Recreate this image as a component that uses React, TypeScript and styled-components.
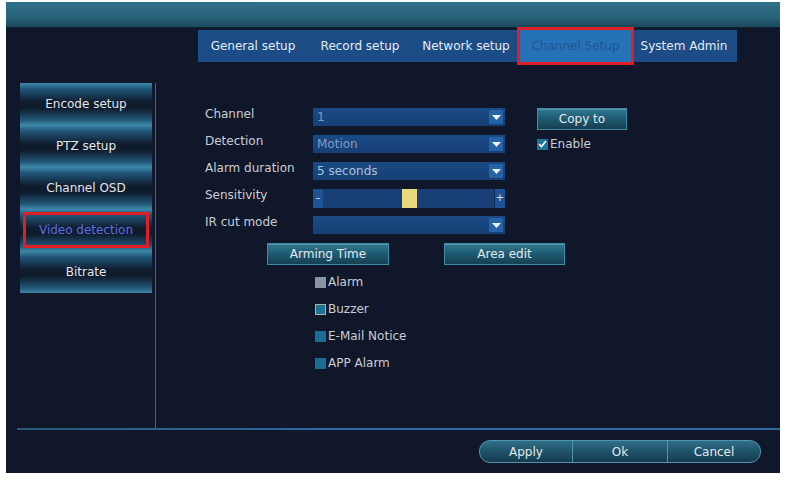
import React from 'react';
import styled, { createGlobalStyle } from 'styled-components';

const GlobalStyle = createGlobalStyle`
  html, body {
    margin: 0;
    padding: 0;
    background: #ffffff;
  }
  body {
    font-family: "DejaVu Sans", Verdana, sans-serif;
  }
`;

const Frame = styled.div`
  width: 774px;
  height: 471px;
  margin: 2px 0 0 6px;
  background: #10172a;
  display: flex;
  flex-direction: column;
  font-size: 12px;
  color: #d4d9e0;
`;

const TopBar = styled.div`
  height: 25px;
  background: linear-gradient(180deg, #2f7189 0%, #28637a 60%, #1b475a 100%);
  border-bottom: 1px solid #0c2330;
`;

const TabRow = styled.div`
  display: flex;
  margin: 2px 0 0 192px;
  width: 539px;
  height: 32px;
  background: #1b4c86;
`;

const Tab = styled.div<{ $w: number; $active?: boolean }>`
  display: flex;
  align-items: center;
  justify-content: center;
  width: ${p => p.$w}px;
  height: 32px;
  white-space: nowrap;
  color: ${p => (p.$active ? '#1f5592' : '#e6ebf2')};
  background: ${p => (p.$active ? '#2672b8' : 'transparent')};
  outline: ${p => (p.$active ? '3px solid #e11d26' : 'none')};
  position: relative;
  z-index: ${p => (p.$active ? 1 : 0)};
`;

const Body = styled.div`
  display: flex;
  height: 366px;
`;

const Sidebar = styled.div`
  width: 150px;
  padding-top: 21px;
  display: flex;
  flex-direction: column;
`;

const SideColumn = styled.div`
  flex: 1;
  padding-left: 14px;
  border-right: 1px solid #2f6f86;
`;

const SideButtons = styled.div`
  width: 132px;
  display: flex;
  flex-direction: column;
`;

const SideButton = styled.div<{ $selected?: boolean }>`
  height: 42px;
  display: flex;
  align-items: center;
  justify-content: center;
  white-space: nowrap;
  color: ${p => (p.$selected ? '#5b6fe0' : '#e2e6ec')};
  background: linear-gradient(
    180deg,
    #3f8aab 0%,
    #22567a 14%,
    #0f1c2e 45%,
    #0f1c2e 60%,
    #1f5070 86%,
    #3c85a6 100%
  );
  outline: ${p => (p.$selected ? '3px solid #e11d26' : 'none')};
  outline-offset: -6px;
`;

const Content = styled.div`
  flex: 1;
  padding: 46px 0 0 49px;
  display: flex;
  flex-direction: column;
`;

const FormGrid = styled.div`
  display: grid;
  grid-template-columns: 108px 192px auto;
  grid-auto-rows: 18px;
  row-gap: 9px;
  align-items: center;
`;

const Label = styled.div`
  color: #c9ced6;
  white-space: nowrap;
  line-height: 18px;
  margin-top: -6px;
`;

const Select = styled.div<{ $dim?: boolean }>`
  height: 18px;
  display: flex;
  align-items: center;
  justify-content: space-between;
  background: linear-gradient(180deg, #1a4a85 0%, #163f74 100%);
  color: ${p => (p.$dim ? '#7e9cc2' : '#aac2de')};
  padding-left: 4px;
  box-sizing: border-box;
`;

const ArrowBox = styled.div`
  width: 14px;
  height: 14px;
  margin-right: 2px;
  background: #2562a6;
  display: flex;
  align-items: center;
  justify-content: center;
`;

const Slider = styled.div`
  height: 19px;
  display: flex;
  align-items: stretch;
  background: #183f75;
`;

const SliderEnd = styled.div`
  width: 10px;
  display: flex;
  align-items: center;
  justify-content: center;
  background: #1d5395;
  color: #dfe6ef;
  font-size: 10px;
  line-height: 1;
`;

const SliderTrack = styled.div`
  flex: 1;
  display: flex;
  align-items: stretch;
  padding-left: 79px;
  border-right: 1px solid #0f2c50;
`;

const Thumb = styled.div`
  width: 15px;
  background: #e8d97c;
`;

const SideCell = styled.div`
  margin-left: 32px;
  align-self: start;
`;

const BlockButton = styled.div<{ $w: number }>`
  width: ${p => p.$w}px;
  height: 22px;
  box-sizing: border-box;
  display: flex;
  align-items: center;
  justify-content: center;
  color: #e3e8ee;
  font-size: 12px;
  background: linear-gradient(180deg, #2f7890 0%, #1f5a70 50%, #163f52 100%);
  border: 1px solid #3f8ba5;
  box-shadow: inset 0 1px 0 rgba(150, 210, 230, 0.35);
`;

const CheckRow = styled.div`
  display: flex;
  align-items: center;
  gap: 2px;
  color: #c9ced6;
  white-space: nowrap;
  line-height: 18px;
`;

const Box = styled.div<{ $color: string; $border?: string }>`
  width: 11px;
  height: 11px;
  box-sizing: border-box;
  background: ${p => p.$color};
  border: 1px solid ${p => p.$border || p.$color};
  display: flex;
  align-items: center;
  justify-content: center;
`;

const ActionRow = styled.div`
  display: flex;
  gap: 55px;
  margin: 9px 0 0 62px;
`;

const CheckList = styled.div`
  display: flex;
  flex-direction: column;
  gap: 9px;
  margin: 8px 0 0 110px;
`;

const Divider = styled.div`
  height: 2px;
  margin-left: 11px;
  background: linear-gradient(90deg, #2b5a78 0%, #2d67a0 40%, #2d67a0 100%);
`;

const Footer = styled.div`
  flex: 1;
  display: flex;
  justify-content: flex-end;
  padding: 10px 19px 0 0;
`;

const PillGroup = styled.div`
  display: flex;
  height: 21px;
  border: 1px solid #4f93ac;
  border-radius: 11px;
  overflow: hidden;
  background: linear-gradient(180deg, #2f7088 0%, #1f5268 50%, #153b4e 100%);
`;

const PillButton = styled.div<{ $w: number }>`
  width: ${p => p.$w}px;
  display: flex;
  align-items: center;
  justify-content: center;
  color: #e3e8ee;
  & + & {
    border-left: 1px solid #4f93ac;
  }
`;

const Arrow = () => (
  <ArrowBox>
    <svg width="9" height="5" viewBox="0 0 9 5">
      <path d="M0 0 H9 L4.5 5 Z" fill="#eef3fa" />
    </svg>
  </ArrowBox>
);

const tabs = [
  { name: 'General setup', w: 110 },
  { name: 'Record setup', w: 104 },
  { name: 'Network setup', w: 108 },
  { name: 'Channel Setup', w: 111, active: true },
  { name: 'System Admin', w: 106 },
];

const menu = ['Encode setup', 'PTZ setup', 'Channel OSD', 'Video detection', 'Bitrate'];

const options = [
  { name: 'Alarm', color: '#8893a3' },
  { name: 'Buzzer', color: '#1d7393', border: '#9fb8a8' },
  { name: 'E-Mail Notice', color: '#1c6d94' },
  { name: 'APP Alarm', color: '#1c6d94' },
];

export default function App() {
  return (
    <>
      <GlobalStyle />
      <Frame>
        <TopBar />
        <TabRow>
          {tabs.map(t => (
            <Tab key={t.name} $w={t.w} $active={t.active}>
              {t.name}
            </Tab>
          ))}
        </TabRow>
        <Body>
          <Sidebar>
            <SideColumn>
              <SideButtons>
                {menu.map(m => (
                  <SideButton key={m} $selected={m === 'Video detection'}>
                    {m}
                  </SideButton>
                ))}
              </SideButtons>
            </SideColumn>
          </Sidebar>
          <Content>
            <FormGrid>
              <Label>Channel</Label>
              <Select $dim>
                1
                <Arrow />
              </Select>
              <SideCell>
                <BlockButton $w={90}>Copy to</BlockButton>
              </SideCell>

              <Label>Detection</Label>
              <Select $dim>
                Motion
                <Arrow />
              </Select>
              <SideCell>
                <CheckRow>
                  <Box $color="#1d7393">
                    <svg width="9" height="8" viewBox="0 0 9 8">
                      <path d="M1 4 L3.5 6.5 L8 1" stroke="#ffffff" strokeWidth="1.6" fill="none" />
                    </svg>
                  </Box>
                  Enable
                </CheckRow>
              </SideCell>

              <Label>Alarm duration</Label>
              <Select>
                5 seconds
                <Arrow />
              </Select>
              <div />

              <Label>Sensitivity</Label>
              <Slider>
                <SliderEnd>–</SliderEnd>
                <SliderTrack>
                  <Thumb />
                </SliderTrack>
                <SliderEnd>+</SliderEnd>
              </Slider>
              <div />

              <Label>IR cut mode</Label>
              <Select>
                <span />
                <Arrow />
              </Select>
              <div />
            </FormGrid>

            <ActionRow>
              <BlockButton $w={122}>Arming Time</BlockButton>
              <BlockButton $w={121}>Area edit</BlockButton>
            </ActionRow>

            <CheckList>
              {options.map(o => (
                <CheckRow key={o.name}>
                  <Box $color={o.color} $border={o.border} />
                  {o.name}
                </CheckRow>
              ))}
            </CheckList>
          </Content>
        </Body>
        <Divider />
        <Footer>
          <PillGroup>
            <PillButton $w={92}>Apply</PillButton>
            <PillButton $w={94}>Ok</PillButton>
            <PillButton $w={92}>Cancel</PillButton>
          </PillGroup>
        </Footer>
      </Frame>
    </>
  );
}
